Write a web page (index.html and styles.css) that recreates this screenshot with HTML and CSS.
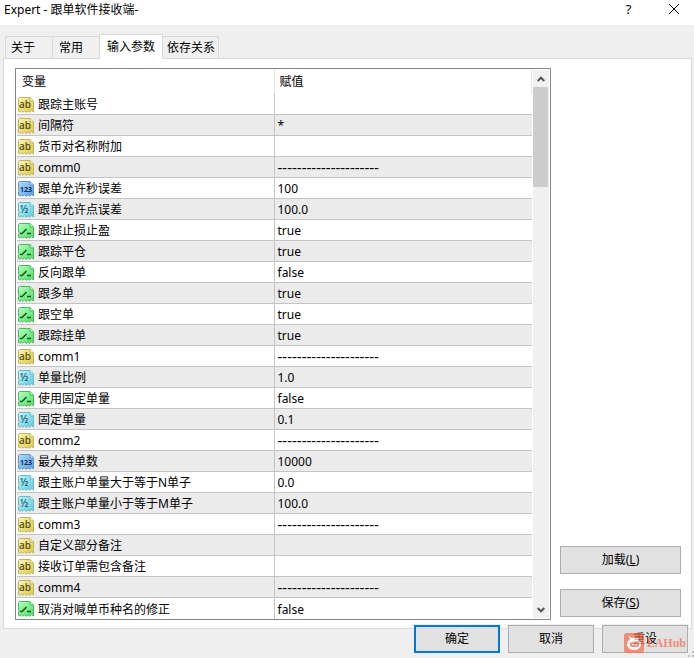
FILE: index.html
```html
<!DOCTYPE html>
<html lang="zh-CN">
<head>
    <meta charset="UTF-8">
    <meta name="viewport" content="width=device-width, initial-scale=1.0">
    <title>Expert - 跟单软件接收端-</title>
    <link rel="stylesheet" href="styles.css">
</head>
<body>
    <!-- Parameter type icons -->
    <svg class="icon-defs" width="0" height="0" aria-hidden="true">
        <defs>
            <linearGradient id="yellow" x1="0" y1="0" x2="1" y2="1"><stop offset="0" stop-color="#fbf6bd"/><stop offset="1" stop-color="#dcc84c"/></linearGradient>
            <linearGradient id="blue" x1="0" y1="0" x2="1" y2="1"><stop offset="0" stop-color="#b4dcff"/><stop offset="1" stop-color="#5a9be0"/></linearGradient>
            <linearGradient id="cyan" x1="0" y1="0" x2="1" y2="1"><stop offset="0" stop-color="#c2f4fb"/><stop offset="1" stop-color="#62c9dc"/></linearGradient>
            <linearGradient id="green" x1="0" y1="0" x2="1" y2="1"><stop offset="0" stop-color="#b5ffbd"/><stop offset="1" stop-color="#4fdc66"/></linearGradient>
            <path id="sheet" d="M1.5 .5H12L15.5 4V15L13.5 13.5L12 15.3L10 13.8L8.5 15.4L6.5 13.8L5 15.3L3.5 14L2 15.2L.5 14.3V11L1.5 10L.5 9V1.5Z"/>
            <path id="fold" d="M12 .5V4H15.5"/>
        </defs>
        <symbol id="icon-string" viewBox="0 0 16 16">
            <use href="#sheet" fill="url(#yellow)" stroke="#c5b454"/>
            <use href="#fold" fill="#f7f0ad" stroke="#c5b454"/>
        </symbol>
        <symbol id="icon-int" viewBox="0 0 16 16">
            <use href="#sheet" fill="url(#blue)" stroke="#5b95d0"/>
            <use href="#fold" fill="#bfe0ff" stroke="#5b95d0"/>
        </symbol>
        <symbol id="icon-double" viewBox="0 0 16 16">
            <use href="#sheet" fill="url(#cyan)" stroke="#66bccb"/>
            <use href="#fold" fill="#c8f5fb" stroke="#66bccb"/>
        </symbol>
        <symbol id="icon-bool" viewBox="0 0 16 16">
            <use href="#sheet" fill="url(#green)" stroke="#48b95c"/>
            <use href="#fold" fill="#c0ffc6" stroke="#48b95c"/>
            <path d="M2 10.5H4L8.5 6M9 10.5H13" fill="none" stroke="#0b5c1c" stroke-width="1.5"/>
        </symbol>
    </svg>

    <div class="dialog">
        <header class="title-bar">
            <h1>Expert - 跟单软件接收端-</h1>
            <button type="button" class="title-button" aria-label="帮助">?</button>
            <button type="button" class="title-button" aria-label="关闭">
                <svg width="10" height="10" viewBox="0 0 10 10"><path d="M0 0L10 10M10 0L0 10" stroke="#000"/></svg>
            </button>
        </header>

        <div class="tabs" role="tablist">
            <button type="button" class="tab" role="tab">关于</button>
            <button type="button" class="tab" role="tab">常用</button>
            <button type="button" class="tab active" role="tab" aria-selected="true">输入参数</button>
            <button type="button" class="tab" role="tab">依存关系</button>
        </div>

        <main class="panel">
            <div class="list">
                <table class="params">
                    <thead>
                        <tr><th>变量</th><th>赋值</th></tr>
                    </thead>
                    <tbody>
                        <tr><td><svg class="icon string"><use href="#icon-string"/><text x="1" y="11">ab</text></svg>跟踪主账号</td><td></td></tr>
                        <tr><td><svg class="icon string"><use href="#icon-string"/><text x="1" y="11">ab</text></svg>间隔符</td><td>*</td></tr>
                        <tr><td><svg class="icon string"><use href="#icon-string"/><text x="1" y="11">ab</text></svg>货币对名称附加</td><td></td></tr>
                        <tr><td><svg class="icon string"><use href="#icon-string"/><text x="1" y="11">ab</text></svg>comm0</td><td class="dashes">---------------------</td></tr>
                        <tr><td><svg class="icon int"><use href="#icon-int"/><text x="2" y="11">123</text></svg>跟单允许秒误差</td><td>100</td></tr>
                        <tr><td><svg class="icon double"><use href="#icon-double"/><text x="2" y="11">½</text></svg>跟单允许点误差</td><td>100.0</td></tr>
                        <tr><td><svg class="icon"><use href="#icon-bool"/></svg>跟踪止损止盈</td><td>true</td></tr>
                        <tr><td><svg class="icon"><use href="#icon-bool"/></svg>跟踪平仓</td><td>true</td></tr>
                        <tr><td><svg class="icon"><use href="#icon-bool"/></svg>反向跟单</td><td>false</td></tr>
                        <tr><td><svg class="icon"><use href="#icon-bool"/></svg>跟多单</td><td>true</td></tr>
                        <tr><td><svg class="icon"><use href="#icon-bool"/></svg>跟空单</td><td>true</td></tr>
                        <tr><td><svg class="icon"><use href="#icon-bool"/></svg>跟踪挂单</td><td>true</td></tr>
                        <tr><td><svg class="icon string"><use href="#icon-string"/><text x="1" y="11">ab</text></svg>comm1</td><td class="dashes">---------------------</td></tr>
                        <tr><td><svg class="icon double"><use href="#icon-double"/><text x="2" y="11">½</text></svg>单量比例</td><td>1.0</td></tr>
                        <tr><td><svg class="icon"><use href="#icon-bool"/></svg>使用固定单量</td><td>false</td></tr>
                        <tr><td><svg class="icon double"><use href="#icon-double"/><text x="2" y="11">½</text></svg>固定单量</td><td>0.1</td></tr>
                        <tr><td><svg class="icon string"><use href="#icon-string"/><text x="1" y="11">ab</text></svg>comm2</td><td class="dashes">---------------------</td></tr>
                        <tr><td><svg class="icon int"><use href="#icon-int"/><text x="2" y="11">123</text></svg>最大持单数</td><td>10000</td></tr>
                        <tr><td><svg class="icon double"><use href="#icon-double"/><text x="2" y="11">½</text></svg>跟主账户单量大于等于N单子</td><td>0.0</td></tr>
                        <tr><td><svg class="icon double"><use href="#icon-double"/><text x="2" y="11">½</text></svg>跟主账户单量小于等于M单子</td><td>100.0</td></tr>
                        <tr><td><svg class="icon string"><use href="#icon-string"/><text x="1" y="11">ab</text></svg>comm3</td><td class="dashes">---------------------</td></tr>
                        <tr><td><svg class="icon string"><use href="#icon-string"/><text x="1" y="11">ab</text></svg>自定义部分备注</td><td></td></tr>
                        <tr><td><svg class="icon string"><use href="#icon-string"/><text x="1" y="11">ab</text></svg>接收订单需包含备注</td><td></td></tr>
                        <tr><td><svg class="icon string"><use href="#icon-string"/><text x="1" y="11">ab</text></svg>comm4</td><td class="dashes">---------------------</td></tr>
                        <tr><td><svg class="icon"><use href="#icon-bool"/></svg>取消对喊单币种名的修正</td><td>false</td></tr>
                    </tbody>
                </table>
                <div class="scrollbar">
                    <button type="button" class="scroll-button" aria-label="向上滚动">
                        <svg width="8" height="6" viewBox="0 0 8 6"><path d="M.7 5L4 1.7L7.3 5" fill="none" stroke="#555" stroke-width="2"/></svg>
                    </button>
                    <div class="scroll-thumb"></div>
                    <button type="button" class="scroll-button last" aria-label="向下滚动">
                        <svg width="8" height="6" viewBox="0 0 8 6"><path d="M.7 1L4 4.3L7.3 1" fill="none" stroke="#555" stroke-width="2"/></svg>
                    </button>
                </div>
            </div>
            <div class="side">
                <button type="button" class="button">加载(<u>L</u>)</button>
                <button type="button" class="button">保存(<u>S</u>)</button>
            </div>
        </main>

        <footer class="footer">
            <button type="button" class="button default">确定</button>
            <button type="button" class="button">取消</button>
            <button type="button" class="button">重设</button>
            <div class="watermark">
                <svg width="20" height="20" viewBox="0 0 20 20">
                    <rect width="20" height="20" rx="3" fill="#f9694c"/>
                    <path d="M4 2L8 5Q10 4 12 5L15 5L14 7Q18 9 17 12Q16 17 10 17Q4 17 3 12Q3 8 6 6Z" fill="#fff"/>
                    <rect x="6" y="9" width="9" height="5" rx="2.5" fill="#f9694c"/>
                    <circle cx="9" cy="11.5" r="1" fill="#fff"/>
                    <circle cx="12" cy="11.5" r="1" fill="#fff"/>
                </svg>
                <span>EAHub</span>
            </div>
            <svg class="grip" width="6" height="6" viewBox="0 0 6 6"><path d="M4 0h2v2h-2zM4 4h2v2h-2zM0 4h2v2h-2z" fill="#bfbfbf"/></svg>
        </footer>
    </div>
</body>
</html>
```

FILE: styles.css
```css
* {
    box-sizing: border-box;
}
body {
    margin: 0;
    background-color: #efefef;
    color: #000;
    font-family: "Noto Sans", "Noto Sans CJK SC", sans-serif;
    font-size: 12px;
    line-height: 20px;
}
button {
    padding: 0;
    border: none;
    background: none;
    color: inherit;
    font: inherit;
}
.icon-defs {
    position: absolute;
}
.title-bar {
    display: flex;
    height: 25px;
    padding-left: 4px;
    background-color: #fff;
}
.title-bar h1 {
    flex: 1;
    margin: 0;
    font-size: 12px;
    font-weight: normal;
}
.title-button {
    display: flex;
    align-items: center;
    justify-content: center;
    width: 45px;
    height: 18px;
    font-size: 13px;
}
.title-button:last-child {
    margin-right: -2px;
}
.tabs {
    display: flex;
    align-items: flex-end;
    padding: 9px 5px 0;
}
.tab {
    height: 22px;
    padding: 0 3px 0 4px;
    border: 1px solid #d9d9d9;
    border-width: 1px 1px 0 0;
    background-color: #f0f0f0;
}
.tab:nth-child(-n+2) {
    width: 47px;
    padding-left: 6px;
    text-align: left;
}
.tab:first-child {
    width: 48px;
    padding-left: 5px;
    border-left-width: 1px;
}
.tab.active {
    height: 25px;
    margin-bottom: -1px;
    margin-left: -1px;
    padding: 0 7px;
    border-left-width: 1px;
    background-color: #fff;
}
.panel {
    display: flex;
    gap: 9px;
    margin: 0 2px 0 3px;
    padding: 9px 10px 8px 11px;
    border: 1px solid #d9d9d9;
    background-color: #fff;
}
.list {
    display: flex;
    flex: 1;
    gap: 1px;
    padding: 0 1px;
    border: 1px solid #828790;
}
.params {
    flex: 1;
    border-collapse: separate;
    border-spacing: 0;
}
.params th {
    height: 25px;
    padding: 1px 5px 0;
    border-right: 1px solid #e5e5e5;
    font-weight: normal;
    text-align: left;
}
.params th:first-child {
    width: 50%;
}
.params td {
    height: 21px;
    padding: 1px 3px 0;
    border-bottom: 1px solid #c4c4c4;
    line-height: 19px;
    white-space: nowrap;
}
.params td:first-child {
    padding: 1px 1px 0;
    border-right: 1px solid #c4c4c4;
}
.params tr:nth-child(even) td {
    background-color: #ebebeb;
}
.params tr:last-child td {
    border-bottom: none;
}
.params .dashes {
    font-size: 15px;
}
.icon {
    width: 16px;
    height: 16px;
    margin: -1px 4px 1px 0;
    vertical-align: middle;
}
.icon text {
    font-family: "Open Sans", sans-serif;
    font-weight: 600;
}
.icon.string text {
    fill: #5a4f0c;
    font-size: 10px;
}
.icon.int text {
    fill: #0b315c;
    font-size: 7px;
    font-weight: bold;
}
.icon.double text {
    fill: #176373;
    font-size: 10px;
}
.scrollbar {
    display: flex;
    flex-direction: column;
    width: 16px;
    margin: 1px 0;
    background-color: #f0f0f0;
}
.scroll-button {
    display: flex;
    align-items: center;
    justify-content: center;
    height: 17px;
}
.scroll-button.last {
    margin-top: auto;
}
.scroll-thumb {
    height: 100px;
    margin-right: 1px;
    background-color: #cdcdcd;
}
.side {
    display: flex;
    flex-direction: column;
    justify-content: flex-end;
    gap: 15px;
    width: 121px;
    padding-bottom: 3px;
}
.button {
    height: 28px;
    border: 1px solid #adadad;
    background-color: #e1e1e1;
    text-align: center;
}
.footer {
    position: relative;
    display: flex;
    justify-content: flex-end;
    gap: 8px;
    margin-top: -4px;
    padding: 0 6px 5px 0;
}
.footer .button {
    width: 86px;
    outline: 1px solid #efefef;
}
.footer .default {
    border: 2px solid #0078d7;
}
.watermark {
    position: absolute;
    right: 8px;
    bottom: 5px;
    display: flex;
    align-items: center;
    gap: 3px;
    color: #f9694c;
    font-family: "Liberation Serif", serif;
    font-size: 12px;
    font-weight: bold;
    opacity: 0.7;
    pointer-events: none;
}
.grip {
    position: absolute;
    right: 0;
    bottom: 1px;
}
```
